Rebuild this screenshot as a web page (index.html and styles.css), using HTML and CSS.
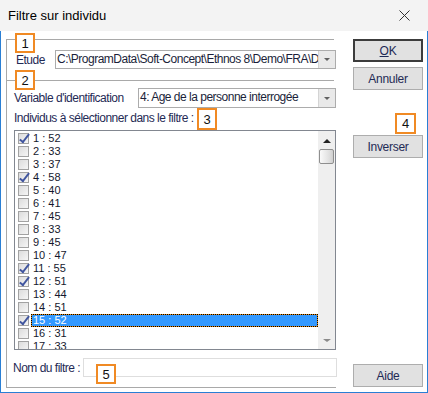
FILE: index.html
```html
<!DOCTYPE html>
<html lang="fr">
  <head>
    <meta charset="utf-8">
    <title>Filtre sur individu</title>
    <link rel="stylesheet" href="styles.css">
  </head>
<body>

<div class="window">
  <div class="titlebar">
    <span class="title">Filtre sur individu</span>
    <svg class="close" width="11" height="11" viewBox="0 0 11 11"><path d="M0.5 0.5 L10.5 10.5 M10.5 0.5 L0.5 10.5" stroke="#333" stroke-width="1" fill="none"/></svg>
  </div>

  <div class="client">
    <div class="main">
      <div class="sep"></div>
      <div class="row row-etude">
        <span class="label">Etude</span>
        <div class="combo combo-etude"><span class="combo-text">C:\ProgramData\Soft-Concept\Ethnos 8\Demo\FRA\Demo.eth</span><span class="drop"></span></div>
      </div>
      <div class="sep sep2"></div>
      <div class="row row-var">
        <span class="label">Variable d'identification</span>
        <div class="combo combo-var"><span class="combo-text">4: Age de la personne interrogée</span><span class="drop"></span></div>
      </div>
      <div class="label list-label">Individus à sélectionner dans le filtre :</div>

      <div class="listbox">
        <ul class="items">
          <li><span class="cb on"></span><span class="lbl">1 : 52</span></li>
          <li><span class="cb"></span><span class="lbl">2 : 33</span></li>
          <li><span class="cb"></span><span class="lbl">3 : 37</span></li>
          <li><span class="cb on"></span><span class="lbl">4 : 58</span></li>
          <li><span class="cb"></span><span class="lbl">5 : 40</span></li>
          <li><span class="cb"></span><span class="lbl">6 : 41</span></li>
          <li><span class="cb"></span><span class="lbl">7 : 45</span></li>
          <li><span class="cb"></span><span class="lbl">8 : 33</span></li>
          <li><span class="cb"></span><span class="lbl">9 : 45</span></li>
          <li><span class="cb"></span><span class="lbl">10 : 47</span></li>
          <li><span class="cb on"></span><span class="lbl">11 : 55</span></li>
          <li><span class="cb on"></span><span class="lbl">12 : 51</span></li>
          <li><span class="cb"></span><span class="lbl">13 : 44</span></li>
          <li><span class="cb"></span><span class="lbl">14 : 51</span></li>
          <li><span class="cb on"></span><span class="lbl sel">15 : 52</span></li>
          <li><span class="cb"></span><span class="lbl">16 : 31</span></li>
          <li><span class="cb"></span><span class="lbl">17 : 33</span></li>
        </ul>
        <div class="vscroll">
          <span class="arrow up"></span>
          <span class="thumb"></span>
          <span class="arrow down"></span>
        </div>
      </div>

      <div class="row row-nom">
        <span class="label">Nom du filtre :</span>
        <div class="input"></div>
      </div>
    </div>

    <div class="side">
      <div class="btn btn-default"><u>O</u>K</div>
      <div class="btn btn-annuler">Annuler</div>
      <div class="btn btn-inverser">Inverser</div>
      <div class="btn btn-aide">Aide</div>
    </div>
  </div>

  <!-- repères numérotés -->
  <span class="mark m1">1</span>
  <span class="mark m2">2</span>
  <span class="mark m3">3</span>
  <span class="mark m4">4</span>
  <span class="mark m5">5</span>
</div>

</body>
</html>
```

FILE: styles.css
```css
    body {
        margin: 0;
        font-family: "Liberation Sans", Arial, sans-serif;
        font-size: 12px;
        background: #ffffff;
    }
    .window {
        position: relative;
        width: 428px;
        height: 393px;
        background: #ffffff;
    }
    .titlebar {
        height: 31px;
        display: flex;
        align-items: center;
        padding-left: 8px;
        background: #f3f3f3;
        box-sizing: border-box;
    }
    .title {
        font-size: 13px;
        color: #000;
    }
    .close {
        margin-left: auto;
        margin-right: 18px;
    }
    .client {
        height: 362px;
        box-sizing: border-box;
        border: 1px solid #2a7fd4;
        border-top: none;
        display: flex;
    }
    .main {
        margin-left: 5px;
        margin-top: 8px;
        width: 330px;
        height: 349px;
        box-sizing: border-box;
        border-left: 1px solid #a9a9a9;
        border-bottom: 1px solid #a9a9a9;
        display: flex;
        flex-direction: column;
    }
    .sep {
        border-top: 1px solid #a9a9a9;
        margin-right: 2px;
    }
    .sep2 {
        margin-top: 11px;
    }
    .label {
        color: #1f2a55;
        letter-spacing: -0.5px;
        white-space: nowrap;
    }
    .row {
        display: flex;
        align-items: center;
    }
    .row-etude {
        margin-top: 10px;
        height: 19px;
        padding-left: 9px;
    }
    .row-var {
        margin-top: 7px;
        height: 20px;
        padding-left: 7px;
    }
    .combo {
        margin-left: auto;
        height: 100%;
        box-sizing: border-box;
        border: 1px solid #acacac;
        display: flex;
        background: #fff;
    }
    .combo-etude { width: 281px; }
    .combo-var { width: 198px; }
    .combo-text {
        flex: 1;
        overflow: hidden;
        white-space: nowrap;
        padding-left: 1px;
        letter-spacing: -0.5px;
        color: #1b1f3a;
        line-height: 17px;
    }
    .drop {
        width: 16px;
        background: #e9e9e9;
        border-left: 1px solid #d4d4d4;
        display: flex;
        align-items: center;
        justify-content: center;
    }
    .drop::after {
        content: "";
        border-left: 3px solid transparent;
        border-right: 3px solid transparent;
        border-top: 3px solid #606060;
    }
    .list-label {
        margin-top: 3px;
        line-height: 14px;
        padding-left: 7px;
    }
    .listbox {
        margin-top: 5px;
        margin-left: 7px;
        height: 220px;
        box-sizing: border-box;
        border: 1px solid #828790;
        display: flex;
        background: #fff;
    }
    .items {
        flex: 1;
        list-style: none;
        margin: 0;
        padding: 1px 0 0 0;
        overflow: hidden;
        font-size: 11px;
    }
    .items li {
        height: 13px;
        display: flex;
    }
    .cb {
        position: relative;
        width: 11px;
        height: 11px;
        box-sizing: border-box;
        margin: 1px 0 0 3px;
        border: 1px solid #a2a2a2;
        background: linear-gradient(135deg, #dcdcdc, #f6f6f6);
    }
    .cb.on::after {
        content: "";
        position: absolute;
        left: 3px;
        top: -2px;
        width: 3px;
        height: 9px;
        border-right: 2px solid #41569f;
        border-bottom: 2px solid #41569f;
        transform: rotate(38deg);
    }
    .lbl {
        flex: 1;
        margin-left: 2px;
        padding-left: 2px;
        line-height: 13px;
        color: #15182e;
    }
    .lbl.sel {
        background: #3399ff;
        color: #fff;
        outline: 1px dotted #000;
        outline-offset: -1px;
        box-shadow: inset 0 0 0 1px #e88a10;
    }
    .vscroll {
        width: 17px;
        background: #efefef;
        display: flex;
        flex-direction: column;
        align-items: center;
    }
    .arrow {
        border-left: 4px solid transparent;
        border-right: 4px solid transparent;
    }
    .arrow.up {
        margin-top: 8px;
        border-bottom: 4px solid #222;
    }
    .arrow.down {
        margin-top: auto;
        margin-bottom: 7px;
        border-top: 3px solid #8a8a8a;
    }
    .thumb {
        margin-top: 6px;
        width: 15px;
        height: 15px;
        box-sizing: border-box;
        border: 1px solid #8f8f8f;
        border-radius: 2px;
        background: linear-gradient(90deg, #fafafa, #e0e0e0 70%, #cfcfcf);
    }
    .row-nom {
        margin-top: 8px;
        height: 19px;
        padding-left: 6px;
    }
    .input {
        margin-left: auto;
        width: 254px;
        height: 100%;
        box-sizing: border-box;
        border: 1px solid #dedede;
        margin-right: -1px;
    }
    .side {
        margin-left: 17px;
        margin-top: 8px;
        width: 70px;
        padding-bottom: 5px;
        display: flex;
        flex-direction: column;
    }
    .btn {
        height: 23px;
        box-sizing: border-box;
        border: 1px solid #adadad;
        background: #e1e1e1;
        color: #1f2a55;
        letter-spacing: -0.3px;
        display: flex;
        align-items: center;
        justify-content: center;
    }
    .btn-default {
        border: 2px solid #3c3c3c;
    }
    .btn-default u {
        text-decoration-thickness: 1px;
    }
    .btn-annuler { margin-top: 5px; }
    .btn-inverser { margin-top: 45px; }
    .btn-aide { margin-top: auto; }

    .mark {
        position: absolute;
        width: 20px;
        height: 20px;
        box-sizing: border-box;
        border: 2px solid #f08a24;
        background: #fff;
        color: #111;
        font-size: 13px;
        display: flex;
        align-items: center;
        justify-content: center;
    }
    .m1 { left: 15px; top: 33px; }
    .m2 { left: 15px; top: 70px; }
    .m3 { left: 197px; top: 108px; height: 22px; }
    .m4 { left: 395px; top: 113px; height: 21px; width: 21px; }
    .m5 { left: 96px; top: 364px; }
```
